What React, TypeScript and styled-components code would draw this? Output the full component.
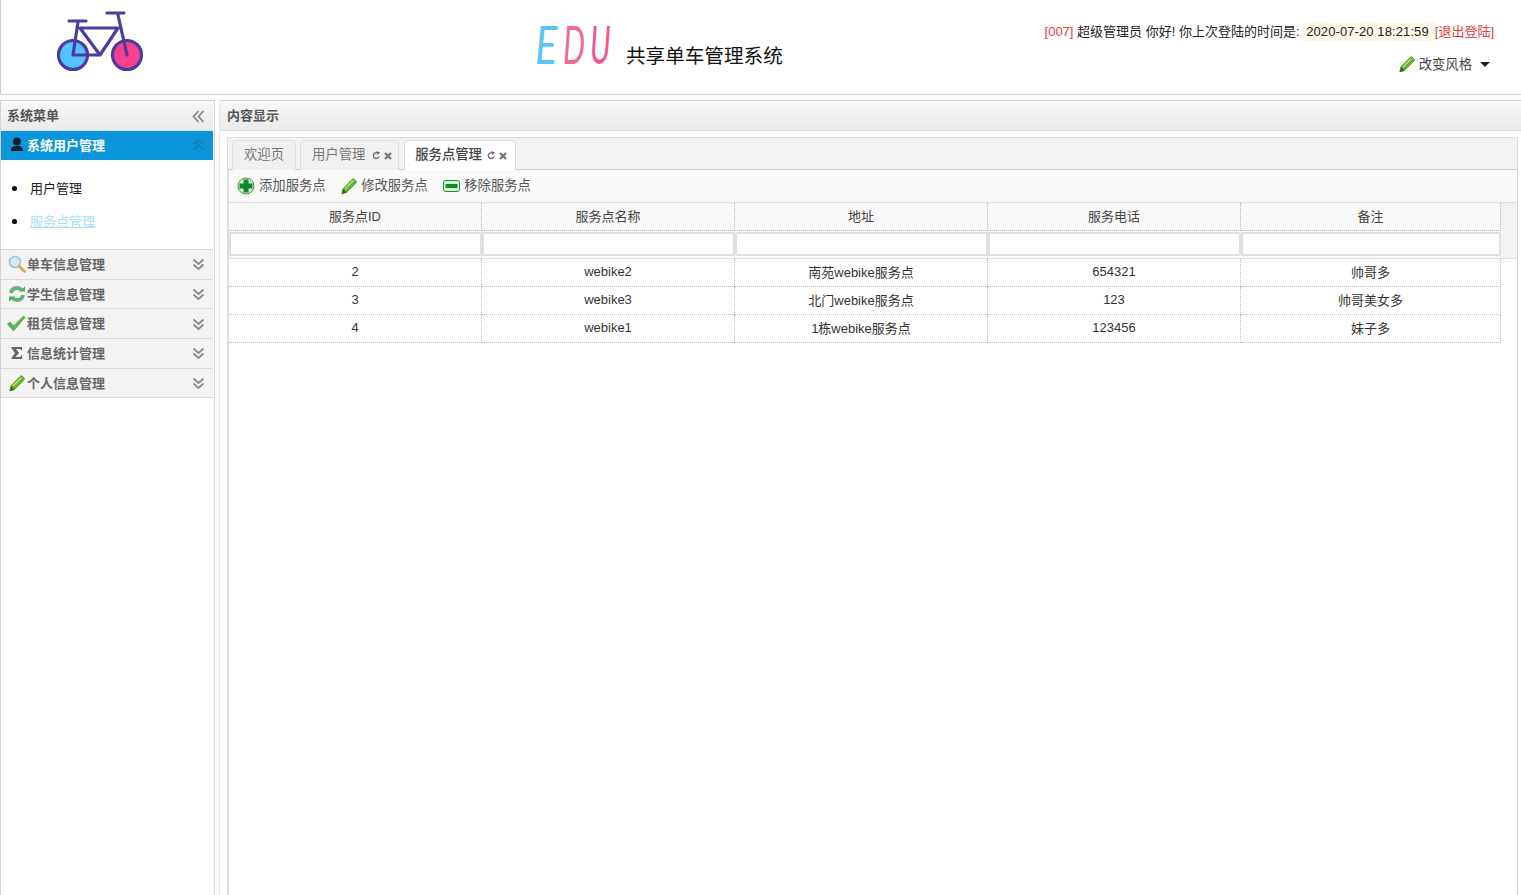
import React from "react";
import styled, { createGlobalStyle } from "styled-components";

const Global = createGlobalStyle`
  html, body { margin: 0; padding: 0; background: #fff; }
  body { font-family: "Liberation Sans", "Noto Sans CJK SC", sans-serif; font-size: 13px; color: #333; }
  * { box-sizing: border-box; }
`;

const Page = styled.div`
  width: 1521px; height: 895px; overflow: hidden; display: flex; flex-direction: column; background: #fff;
`;
const Header = styled.header`
  height: 95px; flex: none; border-left: 1px solid #ccc; border-bottom: 1px solid #ccc;
  display: grid; grid-template-columns: 534px 1fr auto; background: #fff;
`;
const LogoBox = styled.div`
  padding: 10px 0 0 54px;
`;
const Brand = styled.div`
  display: flex; align-items: flex-start; padding-top: 18px;
`;
const EduWord = styled.div`
  display: flex; width: 78px; flex: none;
`;
const EduLetter = styled.span<{ $c: string; $w: number; $sx: number }>`
  display: block; width: ${p => p.$w}px; font-family: Lato, "Open Sans", sans-serif; font-weight: 400; font-style: italic;
  font-size: 52px; line-height: 52px; color: ${p => p.$c};
  transform: scaleX(${p => p.$sx}); transform-origin: left center;
`;
const BrandName = styled.span`
  font-family: "Noto Sans CJK SC", sans-serif; font-size: 19.6px; line-height: 26px; color: #111; margin: 24px 0 0 13px; white-space: nowrap;
`;
const UserBox = styled.div`
  padding: 23px 27px 0 0; display: flex; flex-direction: column; align-items: flex-end;
`;
const UserLine = styled.div`
  line-height: 18px; color: #222; white-space: nowrap;
`;
const Red = styled.span`color: #e33b3b;`;
const Stamp = styled.span`background: #fdf7e6; padding: 2px 6px 2px 3px; letter-spacing: .1px;`;
const StyleMenu = styled.div`
  display: flex; align-items: center; margin: 13px 4px 0 0; color: #444; height: 18px; font-size: 13.33px;
`;
const StyleIcon = styled.span`display: flex; margin-right: 4px; margin-top: 3px;`;
const Caret = styled.i`
  width: 0; height: 0; border: 5px solid transparent; border-top-color: #222; border-bottom: 0; margin-left: 8px; margin-top: 3px;
`;
const Body = styled.div`
  flex: 1; display: flex; min-height: 0; padding-top: 5px; background: #fff;
`;
const West = styled.aside`
  width: 215px; flex: none; border: 1px solid #d4d4d4; border-bottom: 0; display: flex; flex-direction: column;
`;
const PanelTitle = styled.div`
  height: 30px; flex: none; display: flex; align-items: center; justify-content: space-between; padding: 0 8px 2px 6px;
  background: linear-gradient(#f8f8f8, #eaeaea); font-weight: bold; color: #555; border-bottom: 1px solid #ddd;
`;
const WestTitle = styled(PanelTitle)`
  width: 212px;
  svg { margin-top: 3px; }
`;
const CenterTitle = styled(PanelTitle)`padding: 0 8px 3px 7px;`;
const AccordionHead = styled.div<{ $active?: boolean }>`
  height: ${p => (p.$active ? "29px" : "29.7px")}; flex: none; display: flex; align-items: center;
  padding: 0 8px ${p => (p.$active ? 1 : 2)}px 5px; font-weight: bold;
  color: ${p => (p.$active ? "#fff" : "#666")};
  background: ${p => (p.$active ? "#0b96dc" : "#f3f3f3")};
  border-bottom: 1px solid ${p => (p.$active ? "#0b96dc" : "#d8d8d8")};
  width: 212px;
`;
const HeadIcon = styled.span<{ $active?: boolean }>`
  width: 21px; height: 18px; display: flex; align-items: center; justify-content: center; flex: none;
  margin-top: ${p => (p.$active ? 0 : 2)}px;
`;
const HeadText = styled.span`flex: 1;`;
const ChevSlot = styled.span<{ $active?: boolean }>`
  display: flex; margin-top: ${p => (p.$active ? 0 : 3)}px;
`;
const MenuList = styled.ul`
  margin: 0; height: 90px; width: 212px; padding: 12px 0 0 11px; list-style: none; border-bottom: 1px solid #d8d8d8; flex: none;
`;
const MenuItem = styled.li`
  height: 33px; line-height: 33px; color: #222; display: flex; align-items: center;
  &::before { content: ""; width: 5px; height: 5px; border-radius: 50%; background: #000; margin-right: 13px; flex: none; }
`;
const MenuLink = styled.a`
  color: #a9e0f6; text-decoration: underline;
`;
const Center = styled.main`
  margin-left: 4px; flex: 1; min-width: 0; display: flex; flex-direction: column; border-top: 1px solid #d4d4d4; border-left: 1px solid #e8e8e8;
`;
const CenterBody = styled.div`
  flex: 1; min-height: 0; padding: 6px 3px 0 7px; display: flex; flex-direction: column;
`;
const TabStrip = styled.div`
  height: 33px; flex: none; background: #f2f2f2; border: 1px solid #ddd; border-bottom: 1px solid #d0d0d0; padding: 2px 0 0 4px; display: flex; gap: 4px; align-items: flex-end;
`;
const Tab = styled.div<{ $active?: boolean }>`
  height: 30px; padding: 0 ${p => (p.$active ? 8 : 6)}px 5px ${p => (p.$active ? 10 : 11)}px; display: flex; align-items: center; gap: ${p => (p.$active ? 5 : 7)}px;
  border: 1px solid #ddd; border-bottom: 0; border-radius: 5px 5px 0 0; margin: 0 0 -1px ${p => (p.$active ? 1 : 0)}px;
  background: ${p => (p.$active ? "#fff" : "#f0f0f0")}; color: ${p => (p.$active ? "#444" : "#777")};
  font-size: 13.33px; font-weight: ${p => (p.$active ? 500 : "normal")};
`;
const PlainTab = styled(Tab)`padding-right: 11px;`;
const TabTools = styled.span`display: flex; align-items: center; gap: 3px; margin-top: 5px;`;
const Content = styled.div`
  flex: 1; min-height: 0; border-right: 1px solid #d6d6d6; border-left: 2px solid #ddd; background: #fff; display: flex; flex-direction: column;
`;
const Toolbar = styled.div`
  height: 33px; flex: none; display: flex; align-items: center; gap: 15.5px; padding: 0 0 4px 8px; background: #fafafa; border-bottom: 1px solid #ddd; color: #555; font-size: 13.33px;
`;
const ToolButton = styled.span`
  display: flex; align-items: center; gap: 4px;
  svg { margin-top: 4px; }
`;
const GridHead = styled.div`
  border-bottom: 1px solid #ddd; height: 56px; flex: none;
  background: linear-gradient(90deg, #f9f9f9 1272px, #f2f2f2 1272px);
`;
const Row = styled.div<{ $h?: number }>`
  display: grid; grid-template-columns: repeat(4, 253px) 260px; width: 1272px;
  height: ${p => p.$h ?? 28}px;
`;
const Cell = styled.div<{ $head?: boolean }>`
  display: flex; align-items: center; justify-content: center; padding-bottom: 2px; border-right: 1px dotted #bbb; border-bottom: 1px dotted #bbb; color: ${p => (p.$head ? "#444" : "#333")};
`;
const FilterCell = styled.div`
  padding: 1px 0 0;
`;
const FilterInput = styled.input`
  display: block; width: 100%; height: 24px; border: 2px solid #e0e0e0; background: #fff; padding: 0; outline: 0;
`;

const Chev = ({ up, color = "#8a8a8a" }: { up?: boolean; color?: string }) => (
  <svg width="13" height="13" viewBox="0 0 13 13" fill="none" stroke={color} strokeWidth="1.8" style={up ? { transform: "scaleY(-1)" } : undefined}>
    <path d="M1.500 1.500 6.500 6l5-4.500M1.500 6.500l5 4.500 5-4.500" />
  </svg>
);
const ChevLeft = () => (
  <svg width="13" height="13" viewBox="0 0 13 13" fill="none" stroke="#888" strokeWidth="1.8">
    <path d="M6.500 1 1.500 6.500l5 5.500M11.500 1 6.500 6.500l5 5.500" />
  </svg>
);
const Bike = () => (
  <svg width="90" height="64" viewBox="0 0 90 64" fill="none" stroke="#4b3d9f" strokeWidth="3.2" strokeLinecap="round" strokeLinejoin="round">
    <circle cx="18" cy="45" r="14.500" fill="#55c3ff" />
    <circle cx="72" cy="45" r="14.500" fill="#f8408f" />
    <path d="M14 11h17M52 3h17M23 12 18 45h27L63 18H25L45 45M63 5l9 40" />
  </svg>
);
const Pencil = () => (
  <svg width="16" height="17" viewBox="0 0 16 17">
    <path d="M.8 16 2 10.800 11.300 1.200c.6-.6 1.500-.6 2 0l1.700 1.800c.5.600.5 1.300 0 1.900L5.600 14.500Z" fill="#66b52f" stroke="#3f8f1d" strokeWidth=".7" />
    <path d="M.8 16 2 10.800l3.600 3.700Z" fill="#3b6b1e" />
    <path d="M4 11 12.500 2.500" stroke="#b4e27f" strokeWidth="1.500" />
  </svg>
);
const Plus = () => (
  <svg width="18" height="18" viewBox="0 0 18 18">
    <circle cx="9" cy="9" r="8" fill="#d4ecd0" stroke="#3b9a45" />
    <path d="M6.500 2.500h5v4h4v5h-4v4h-5v-4h-4v-5h4Z" fill="#0f8a2c" />
  </svg>
);
const Minus = () => (
  <svg width="17" height="12" viewBox="0 0 17 12">
    <rect x=".5" y=".5" width="16" height="11" rx="2" fill="#d8efd8" stroke="#248a35" />
    <rect x="2.500" y="4" width="12" height="4" fill="#0f8a2c" />
  </svg>
);
const Person = () => (
  <svg width="16" height="15" viewBox="0 0 16 15" fill="#08202e">
    <circle cx="8" cy="4.500" r="4" />
    <path d="M2 14v-1.500C2 10.500 4 9.500 6 9h4c2 .5 4 1.500 4 3.500V14Z" />
  </svg>
);
const Search = () => (
  <svg width="18" height="18" viewBox="0 0 18 18" fill="none">
    <circle cx="7" cy="7" r="5.500" fill="#d5e9f7" stroke="#9cc0d8" strokeWidth="1.600" />
    <path d="M11 11l5.500 5.500" stroke="#e0a24e" strokeWidth="2.600" strokeLinecap="round" />
  </svg>
);
const Refresh = () => (
  <svg width="18" height="18" viewBox="0 0 18 18" fill="none" stroke="#6aae7a" strokeWidth="3.800">
    <path d="M3 8c.5-3.500 3-5 6-5 2 0 3.500.8 4.500 2" />
    <path d="M15 10c-.5 3.500-3 5-6 5-2 0-3.500-.8-4.500-2" />
    <path d="M11 6.500h6V1.500Z M7 11.500H1V16.500Z" fill="#5ba85a" stroke="none" />
  </svg>
);
const Check = () => (
  <svg width="19" height="17" viewBox="0 0 19 17">
    <path d="M.5 9 3 7l3.500 4L16.500 1 18 2.500 6.500 16Z" fill="#58b94d" stroke="#3e9a3a" strokeWidth=".6" />
  </svg>
);
const Sigma = () => (
  <svg width="16" height="14" viewBox="0 0 16 14">
    <path d="M2.500 1h10.500v3.500h-1L11.500 3H7l3 4-3.500 4h5l.8-1.800h1L13 13H2.500v-1.300L6 7 2.500 2.300Z" fill="#666" />
  </svg>
);
const Reload = () => (
  <svg width="9" height="9" viewBox="0 0 9 9" fill="none" stroke="#667" strokeWidth="1.300">
    <path d="M7 5.500A2.900 2.900 0 1 1 5.500 2" />
    <path d="M4.500 0 8 1.500 5.500 4Z" fill="#667" stroke="none" />
  </svg>
);
const Close = () => (
  <svg width="8" height="8" viewBox="0 0 8 8" stroke="#6d7480" strokeWidth="2.200">
    <path d="M1 1l6 6M7 1 1 7" />
  </svg>
);

const columns = ["服务点ID", "服务点名称", "地址", "服务电话", "备注"];
const rows = [
  ["2", "webike2", "南苑webike服务点", "654321", "帅哥多"],
  ["3", "webike3", "北门webike服务点", "123", "帅哥美女多"],
  ["4", "webike1", "1栋webike服务点", "123456", "妹子多"],
];
const menus = [
  { icon: <Search />, label: "单车信息管理" },
  { icon: <Refresh />, label: "学生信息管理" },
  { icon: <Check />, label: "租赁信息管理" },
  { icon: <Sigma />, label: "信息统计管理" },
  { icon: <Pencil />, label: "个人信息管理" },
];

export default function App() {
  return (
    <Page>
      <Global />
      <Header>
        <LogoBox><Bike /></LogoBox>
        <Brand>
          <EduWord>
            <EduLetter $c="#5cc6f2" $w={28} $sx={0.8}>E</EduLetter>
            <EduLetter $c="#ee6b95" $w={27} $sx={0.6}>D</EduLetter>
            <EduLetter $c="#f2558f" $w={23} $sx={0.58}>U</EduLetter>
          </EduWord>
          <BrandName>共享单车管理系统</BrandName>
        </Brand>
        <UserBox>
          <UserLine>
            <Red>[007]</Red> 超级管理员 你好! 你上次登陆的时间是: <Stamp>2020-07-20 18:21:59</Stamp><Red>[退出登陆]</Red>
          </UserLine>
          <StyleMenu><StyleIcon><Pencil /></StyleIcon>改变风格<Caret /></StyleMenu>
        </UserBox>
      </Header>
      <Body>
        <West>
          <WestTitle>系统菜单<ChevLeft /></WestTitle>
          <AccordionHead $active>
            <HeadIcon $active><Person /></HeadIcon>
            <HeadText>系统用户管理</HeadText>
            <ChevSlot $active><Chev up color="#1f7cb0" /></ChevSlot>
          </AccordionHead>
          <MenuList>
            <MenuItem>用户管理</MenuItem>
            <MenuItem><MenuLink>服务点管理</MenuLink></MenuItem>
          </MenuList>
          {menus.map(m => (
            <AccordionHead key={m.label}>
              <HeadIcon>{m.icon}</HeadIcon>
              <HeadText>{m.label}</HeadText>
              <ChevSlot><Chev /></ChevSlot>
            </AccordionHead>
          ))}
        </West>
        <Center>
          <CenterTitle>内容显示</CenterTitle>
          <CenterBody>
            <TabStrip>
              <PlainTab>欢迎页</PlainTab>
              <Tab>用户管理<TabTools><Reload /><Close /></TabTools></Tab>
              <Tab $active>服务点管理<TabTools><Reload /><Close /></TabTools></Tab>
            </TabStrip>
            <Content>
              <Toolbar>
                <ToolButton><Plus />添加服务点</ToolButton>
                <ToolButton><Pencil />修改服务点</ToolButton>
                <ToolButton><Minus />移除服务点</ToolButton>
              </Toolbar>
              <GridHead>
                <Row $h={28}>{columns.map(c => <Cell $head key={c}>{c}</Cell>)}</Row>
                <Row $h={27}>{columns.map(c => <FilterCell key={c}><FilterInput /></FilterCell>)}</Row>
              </GridHead>
              {rows.map(r => (
                <Row key={r[0]}>{r.map((v, i) => <Cell key={i}>{v}</Cell>)}</Row>
              ))}
            </Content>
          </CenterBody>
        </Center>
      </Body>
    </Page>
  );
}
